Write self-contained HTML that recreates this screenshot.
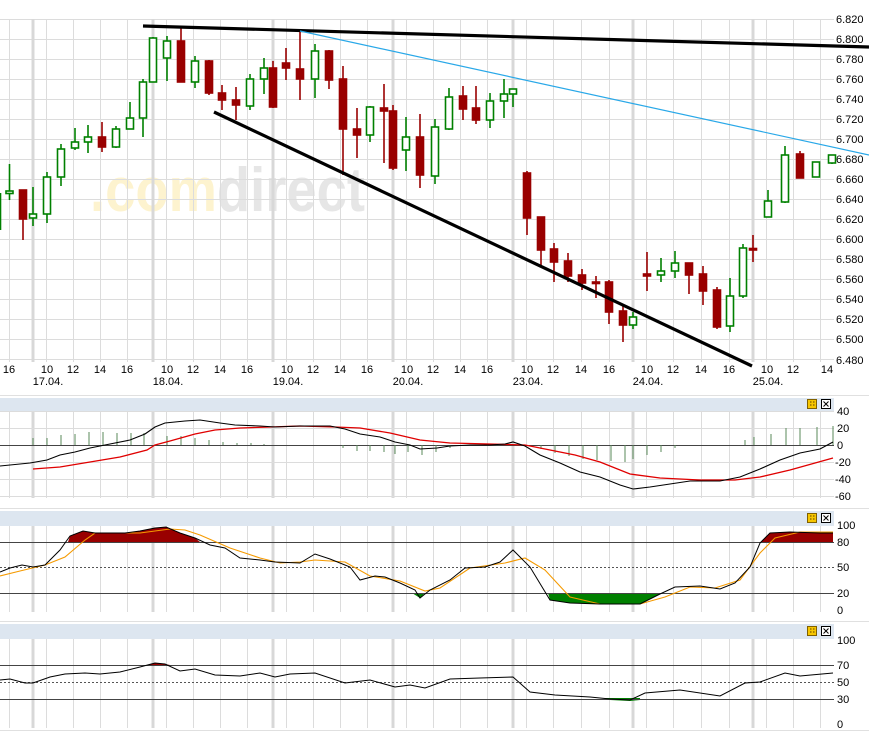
<!DOCTYPE html>
<html><head><meta charset="utf-8"><style>
html,body{margin:0;padding:0;background:#fff;}
svg{display:block;font-family:"Liberation Sans",Arial,sans-serif;}
</style></head><body>
<svg width="869" height="732" viewBox="0 0 869 732" xmlns="http://www.w3.org/2000/svg">
<rect width="869" height="732" fill="#fff"/>
<!-- watermark -->
<text x="90" y="211" font-size="62" font-weight="bold" textLength="275" lengthAdjust="spacingAndGlyphs"><tspan fill="#fdf3cf">.com</tspan><tspan fill="#e6e6e6">direct</tspan></text>

<g id="grid">
<!-- price horizontal -->
<g stroke="#dcdcdc" stroke-width="1">
<path d="M0 19.5H834M0 39.5H834M0 59.5H834M0 79.5H834M0 99.5H834M0 119.5H834M0 139.5H834M0 159.5H834M0 179.5H834M0 199.5H834M0 219.5H834M0 239.5H834M0 259.5H834M0 279.5H834M0 299.5H834M0 319.5H834M0 339.5H834M0 359.5H834"/>
</g>
</g>
<!-- vertical grid in each panel -->
<defs>
<g id="vthin" stroke="#dcdcdc" stroke-width="1">
<path d="M9.5 0V1M46.5 0V1M73.5 0V1M100.5 0V1M127.5 0V1M166.5 0V1M193.5 0V1M220.5 0V1M247.5 0V1M286.5 0V1M313.5 0V1M340.5 0V1M367.5 0V1M406.5 0V1M433.5 0V1M460.5 0V1M487.5 0V1M526.5 0V1M553.5 0V1M581.5 0V1M609.5 0V1M646.5 0V1M673.5 0V1M701.5 0V1M729.5 0V1M766.5 0V1M793.5 0V1M820.5 0V1"/>
</g>
<g id="vthick" stroke="#d8d8d8" stroke-width="3">
<path d="M33 0V1M153 0V1M273 0V1M393 0V1M513 0V1M633 0V1M753 0V1"/>
</g>
</defs>
<g transform="translate(0,19) scale(1,343)"><use href="#vthin"/><use href="#vthick"/></g>
<g transform="translate(0,411) scale(1,87)"><use href="#vthin"/><use href="#vthick"/></g>
<g transform="translate(0,526) scale(1,86)"><use href="#vthin"/><use href="#vthick"/></g>
<g transform="translate(0,639) scale(1,89)"><use href="#vthin"/><use href="#vthick"/></g>

<!-- candles -->
<g id="candles" stroke-width="1.6">
<g stroke="#008000" fill="#fff">
<path d="M0.5 193V230"/>
<path d="M9.5 164V200"/><rect x="6" y="191" width="7" height="2.5"/>
<path d="M33 187V226"/><rect x="29.5" y="214" width="7" height="4"/>
<path d="M47 172V223"/><rect x="43.5" y="177" width="7" height="37"/>
<path d="M61 144V186"/><rect x="57.5" y="149" width="7" height="28"/>
<path d="M75 128V150"/><rect x="71.5" y="142" width="7" height="6"/>
<path d="M88 125V153"/><rect x="84.5" y="137" width="7" height="5"/>
<path d="M116 126V148"/><rect x="112.5" y="129" width="7" height="18"/>
<path d="M130 102V129"/><rect x="126.5" y="118" width="7" height="11"/>
<path d="M143 79V137"/><rect x="139.5" y="82" width="7" height="36"/>
<path d="M153 37V82"/><rect x="149.5" y="38" width="7" height="44"/>
<path d="M167 36V81"/><rect x="163.5" y="41" width="7" height="17"/>
<path d="M195 56V88"/><rect x="191.5" y="61" width="7" height="21"/>
<path d="M250 74V110"/><rect x="246.5" y="79" width="7" height="27"/>
<path d="M264 58V94"/><rect x="260.5" y="68" width="7" height="11"/>
<path d="M315 44V98"/><rect x="311.5" y="51" width="7" height="28"/>
<path d="M370 106V142"/><rect x="366.5" y="107" width="7" height="28"/>
<path d="M406 117V171"/><rect x="402.5" y="137" width="7" height="13"/>
<path d="M435 119V184"/><rect x="431.5" y="127" width="7" height="49"/>
<path d="M449 88V130"/><rect x="445.5" y="97" width="7" height="32"/>
<path d="M490 93V128"/><rect x="486.5" y="101" width="7" height="19"/>
<path d="M504 79V118"/><rect x="500.5" y="94" width="7" height="7"/>
<path d="M513 89V107"/><rect x="509.5" y="89" width="7" height="5"/>
<path d="M633 312V329"/><rect x="629.5" y="317" width="7" height="8"/>
<path d="M661 258V282"/><rect x="657.5" y="271" width="7" height="4"/>
<path d="M675 251V278"/><rect x="671.5" y="263" width="7" height="8"/>
<path d="M730 278V332"/><rect x="726.5" y="296" width="7" height="30"/>
<path d="M743 244V298"/><rect x="739.5" y="248" width="7" height="48"/>
<path d="M768 190V217"/><rect x="764.5" y="201" width="7" height="16"/>
<path d="M785 146V203"/><rect x="781.5" y="155" width="7" height="47"/>
<rect x="812.5" y="162" width="7" height="15"/>
<path d="M832 155V164"/><rect x="828.5" y="155" width="7" height="8"/>
</g>
<g stroke="#990000" fill="#990000">
<path d="M23 190V240"/><rect x="19.5" y="190" width="7" height="29"/>
<path d="M102 122V152"/><rect x="98.5" y="137" width="7" height="10"/>
<path d="M181 28V82"/><rect x="177.5" y="41" width="7" height="41"/>
<path d="M209 60V95"/><rect x="205.5" y="61" width="7" height="32"/>
<path d="M222 85V110"/><rect x="218.5" y="93" width="7" height="7"/>
<path d="M236 87V120"/><rect x="232.5" y="100" width="7" height="5"/>
<path d="M273 61V108"/><rect x="269.5" y="68" width="7" height="39"/>
<path d="M286 48V80"/><rect x="282.5" y="63" width="7" height="5"/>
<path d="M300 31V100"/><rect x="296.5" y="69" width="7" height="10"/>
<path d="M329 50V89"/><rect x="325.5" y="51" width="7" height="29"/>
<path d="M343 66V175"/><rect x="339.5" y="79" width="7" height="50"/>
<path d="M357 108V158"/><rect x="353.5" y="129" width="7" height="6"/>
<path d="M384 84V163"/><rect x="380.5" y="108" width="7" height="3"/>
<path d="M393 105V170"/><rect x="389.5" y="111" width="7" height="57"/>
<path d="M420 114V188"/><rect x="416.5" y="137" width="7" height="38"/>
<path d="M463 86V120"/><rect x="459.5" y="96" width="7" height="13"/>
<path d="M476 86V124"/><rect x="472.5" y="108" width="7" height="12"/>
<path d="M527 171V235"/><rect x="523.5" y="173" width="7" height="45"/>
<path d="M541 217V265"/><rect x="537.5" y="217" width="7" height="33"/>
<path d="M554 243V282"/><rect x="550.5" y="249" width="7" height="13"/>
<path d="M568 253V282"/><rect x="564.5" y="261" width="7" height="15"/>
<path d="M582 269V290"/><rect x="578.5" y="275" width="7" height="8"/>
<path d="M596 276V298"/><rect x="592.5" y="282" width="7" height="1.5"/>
<path d="M609 280V324"/><rect x="605.5" y="282" width="7" height="30"/>
<path d="M623 305V342"/><rect x="619.5" y="311" width="7" height="14"/>
<path d="M647 252V291"/><rect x="643.5" y="274" width="7" height="2"/>
<path d="M689 263V294"/><rect x="685.5" y="263" width="7" height="12"/>
<path d="M703 266V305"/><rect x="699.5" y="274" width="7" height="17"/>
<path d="M717 287V329"/><rect x="713.5" y="290" width="7" height="37"/>
<path d="M753 235V262"/><rect x="749.5" y="248.5" width="7" height="1.5"/>
<path d="M800 151V178"/><rect x="796.5" y="154" width="7" height="24"/>
</g>
</g>

<!-- trend lines -->
<path d="M143 26L869 47" stroke="#000" stroke-width="3.2"/>
<path d="M300 31L869 155" stroke="#29a8e8" stroke-width="1.2"/>
<path d="M214 112L752 366" stroke="#000" stroke-width="3.2"/>

<!-- price axis -->
<g font-size="11" fill="#000">
<text x="836" y="23">6.820</text><text x="836" y="43">6.800</text><text x="836" y="63">6.780</text><text x="836" y="83">6.760</text><text x="836" y="103">6.740</text><text x="836" y="123">6.720</text><text x="836" y="143">6.700</text><text x="836" y="163">6.680</text><text x="836" y="183">6.660</text><text x="836" y="203">6.640</text><text x="836" y="223">6.620</text><text x="836" y="243">6.600</text><text x="836" y="263">6.580</text><text x="836" y="283">6.560</text><text x="836" y="303">6.540</text><text x="836" y="323">6.520</text><text x="836" y="343">6.500</text><text x="836" y="364">6.480</text>
</g>
<!-- time axis -->
<g font-size="11" fill="#000" text-anchor="middle">
<text x="9" y="373">16</text>
<text x="47" y="373">10</text><text x="73" y="373">12</text><text x="100" y="373">14</text><text x="127" y="373">16</text>
<text x="167" y="373">10</text><text x="193" y="373">12</text><text x="220" y="373">14</text><text x="247" y="373">16</text>
<text x="287" y="373">10</text><text x="313" y="373">12</text><text x="340" y="373">14</text><text x="367" y="373">16</text>
<text x="407" y="373">10</text><text x="433" y="373">12</text><text x="460" y="373">14</text><text x="487" y="373">16</text>
<text x="527" y="373">10</text><text x="553" y="373">12</text><text x="581" y="373">14</text><text x="609" y="373">16</text>
<text x="647" y="373">10</text><text x="673" y="373">12</text><text x="701" y="373">14</text><text x="729" y="373">16</text>
<text x="767" y="373">10</text><text x="793" y="373">12</text><text x="827" y="373">14</text>
<text x="48" y="385">17.04.</text><text x="168" y="385">18.04.</text><text x="288" y="385">19.04.</text><text x="408" y="385">20.04.</text><text x="528" y="385">23.04.</text><text x="648" y="385">24.04.</text><text x="768" y="385">25.04.</text>
</g>

<!-- separators & headers -->
<g fill="#dde6f0">
<rect x="0" y="398" width="834" height="13"/>
<rect x="0" y="511" width="834" height="15"/>
<rect x="0" y="624" width="834" height="15"/>
</g>
<g stroke="#e0e0e0"><path d="M0 395.5H869M0 508.5H869M0 621.5H869M0 730.5H869"/></g>
<g>
<g transform="translate(0,399)"><rect x="807.5" y="0.5" width="9" height="9" fill="#f7c600" stroke="#806000"/><path d="M810 3h1.5M813 3h1.5M810 6h1.5M813 6h1.5" stroke="#604000"/><rect x="821.5" y="0.5" width="9" height="9" fill="#fff" stroke="#000"/><path d="M823.5 2.5l5 5M828.5 2.5l-5 5" stroke="#000"/></g>
<g transform="translate(0,513)"><rect x="807.5" y="0.5" width="9" height="9" fill="#f7c600" stroke="#806000"/><path d="M810 3h1.5M813 3h1.5M810 6h1.5M813 6h1.5" stroke="#604000"/><rect x="821.5" y="0.5" width="9" height="9" fill="#fff" stroke="#000"/><path d="M823.5 2.5l5 5M828.5 2.5l-5 5" stroke="#000"/></g>
<g transform="translate(0,626)"><rect x="807.5" y="0.5" width="9" height="9" fill="#f7c600" stroke="#806000"/><path d="M810 3h1.5M813 3h1.5M810 6h1.5M813 6h1.5" stroke="#604000"/><rect x="821.5" y="0.5" width="9" height="9" fill="#fff" stroke="#000"/><path d="M823.5 2.5l5 5M828.5 2.5l-5 5" stroke="#000"/></g>
</g>

<!-- MACD panel -->
<g stroke="#dcdcdc"><path d="M0 411.5H834M0 428.5H834M0 462.5H834M0 479.5H834M0 496.5H834"/></g>
<path d="M0 445.5H834" stroke="#444"/>
<g stroke="#5a8a5a" stroke-width="1">
<path d="M33 445V438M47 445V438M61 445V435M75 445V434M89 445V432M103 445V432M117 445V433M131 445V433M144 445V433M167 445V436M181 445V436M195 445V438M209 445V440M223 445V442M237 445V443M251 445V443M264 445V444M343 445V448M357 445V451M370 445V451M384 445V452M395 445V454M408 445V452M422 445V455M436 445V452M450 445V448M541 445V449M555 445V453M569 445V456M583 445V459M597 445V460M611 445V461M625 445V462M633 445V459M647 445V455M661 445V452M675 445V448M745 445V440M754 445V437M771 445V434M786 445V428M800 445V428M817 445V427M833 445V426"/>
</g>
<polyline fill="none" stroke="#e00000" stroke-width="1.3" points="33,469 60,467 90,462 120,457 147,450 155,445 170,441 195,434 215,430 240,428 270,427 300,426 335,427 360,428 390,433 420,440 450,443 490,444 525,445 550,450 575,455 600,462 630,474 660,478 700,480 735,480 760,477 790,470 833,458"/>
<polyline fill="none" stroke="#000" stroke-width="1.1" points="0,466 30,463 47,460 60,455 75,452 90,448 110,444 130,440 145,434 155,427 165,423 185,421 200,420 220,423 235,425 260,426 275,427 300,426 330,426 345,429 360,434 380,437 395,442 410,445 420,449 437,448 450,446 470,445 490,445 505,444 513,442 525,446 540,455 560,463 580,472 600,477 620,485 633,489 650,487 670,484 690,481 720,481 740,477 760,469 780,460 800,453 820,449 833,442"/>
<g font-size="11" fill="#000"><text x="837" y="415">40</text><text x="837" y="432">20</text><text x="837" y="449">0</text><text x="835" y="466">-20</text><text x="835" y="483">-40</text><text x="835" y="500">-60</text></g>

<!-- Stochastic panel -->
<path d="M68,542 70,536 83,531 95,533 125,533 140,531 155,528 166,527 180,533 195,538 200,542Z" fill="#990000"/>
<path d="M752,542 760,543 770,533 790,532 833,532 833,542Z" fill="#990000"/>
<path d="M412,593 420,598 425,593Z" fill="#008000"/>
<path d="M548,593 550,600 570,603 600,604 640,604 660,594 662,593Z" fill="#008000"/>
<g stroke="#444"><path d="M0 542.5H834M0 593.5H834"/></g>
<path d="M0 567.5H834" stroke="#555" stroke-dasharray="2,2"/>
<polyline fill="none" stroke="#f59a00" stroke-width="1.1" points="0,576 20,571 45,565 65,557 85,540 95,533 140,533 170,529 185,530 200,535 230,548 260,558 280,563 300,562 315,560 345,562 370,576 400,581 425,591 440,588 470,568 505,563 525,558 545,570 570,597 600,604 640,604 665,597 690,587 715,588 740,580 760,553 775,538 800,532 833,532"/>
<polyline fill="none" stroke="#000" stroke-width="1" points="0,572 10,568 22,565 33,567 45,565 60,550 70,536 83,531 95,533 125,533 140,531 155,528 166,527 180,533 195,538 210,545 225,548 240,558 260,560 275,562 300,563 315,554 330,559 350,567 360,580 375,576 385,577 400,583 415,590 420,598 430,590 450,580 465,568 485,567 500,562 513,550 530,567 550,600 570,603 600,604 640,604 660,594 675,587 700,586 720,589 735,583 750,567 760,543 770,533 790,532 820,533 833,533"/>
<g font-size="11" fill="#000"><text x="837" y="529">100</text><text x="837" y="546">80</text><text x="837" y="571">50</text><text x="837" y="597">20</text><text x="837" y="614">0</text></g>

<!-- RSI panel -->
<path d="M147,665 155,663 165,664 170,665Z" fill="#990000"/>
<path d="M605,699 610,699 630,700 640,699Z" fill="#008000" stroke="#008000" stroke-width="2"/>
<g stroke="#444"><path d="M0 665.5H834M0 699.5H834"/></g>
<path d="M0 682.5H834" stroke="#555" stroke-dasharray="2,2"/>
<polyline fill="none" stroke="#000" stroke-width="1" points="0,680 10,679 25,683 33,683 50,677 65,674 85,673 100,674 120,672 140,667 155,663 165,664 180,671 195,669 215,675 240,676 260,673 275,677 290,674 315,673 345,683 370,680 395,687 410,685 425,688 450,679 480,678 513,677 530,692 555,695 590,697 610,699 630,700 645,693 680,690 720,696 745,683 760,682 785,673 800,676 833,673"/>
<g font-size="11" fill="#000"><text x="837" y="644">100</text><text x="837" y="669">70</text><text x="837" y="686">50</text><text x="837" y="703">30</text><text x="837" y="728">0</text></g>
</svg>
</body></html>
